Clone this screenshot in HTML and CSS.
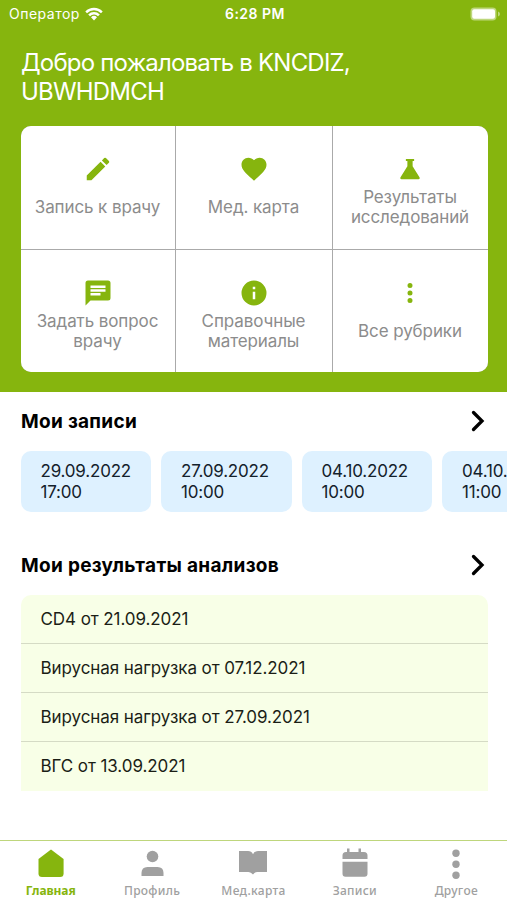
FILE: index.html
```html
<!DOCTYPE html>
<html lang="ru">

<head>
    <meta charset="UTF-8">
    <meta name="viewport" content="width=device-width, initial-scale=1.0">
    <title>Главная</title>
    <link rel="stylesheet" href="styles.css">
</head>

<body>
    <div class="app">
        <header class="header">
            <div class="status-bar">
                <div class="operator">
                    <span>Оператор</span>
                    <svg class="wifi" viewBox="0 0 18 14">
                        <path d="M0.3 4.4a12.4 12.4 0 0 1 17.4 0l-1.7 1.8a10 10 0 0 0-14 0z" />
                        <path d="M3.2 7.4a8.3 8.3 0 0 1 11.6 0l-1.8 1.8a5.8 5.8 0 0 0-8 0z" />
                        <path d="M6 10.3a4.3 4.3 0 0 1 6 0l-3 3.2z" />
                    </svg>
                </div>
                <div class="time">6:28 PM</div>
                <svg class="battery" viewBox="0 0 31 14">
                    <rect class="battery-case" x="0.5" y="0.5" width="26" height="13" rx="4" />
                    <rect x="2.2" y="2.2" width="22.8" height="9.6" rx="2" />
                    <path class="battery-tip" d="M28 4.6q2 0.8 2 2.4t-2 2.4z" />
                </svg>
            </div>
            <h1 class="welcome">Добро пожаловать в KNCDIZ, UBWHDMCH</h1>
            <div class="menu">
                <a class="menu-item">
                    <svg viewBox="0 0 24 24"><path d="M3 17.25V21h3.75L17.81 9.94l-3.75-3.75zM20.71 7.04a1 1 0 0 0 0-1.41l-2.34-2.34a1 1 0 0 0-1.41 0l-1.83 1.83 3.75 3.75z" /></svg>
                    <span>Запись к врачу</span>
                </a>
                <a class="menu-item">
                    <svg viewBox="0 0 24 24"><path d="M12 21.35l-1.45-1.32C5.4 15.36 2 12.28 2 8.5 2 5.42 4.42 3 7.5 3c1.74 0 3.41.81 4.5 2.09C13.09 3.81 14.76 3 16.5 3 19.58 3 22 5.42 22 8.5c0 3.78-3.4 6.86-8.55 11.54z" /></svg>
                    <span>Мед. карта</span>
                </a>
                <a class="menu-item two-lines">
                    <svg viewBox="0 0 24 24"><path d="M8.7 4h6.6v1.5h-1.2v4.3l5.6 9q.4 1.400-.8 1.400H5.100q-1.200 0-.8-1.400l5.600-9V5.500H8.700z" /></svg>
                    <span>Результаты исследований</span>
                </a>
                <a class="menu-item two-lines">
                    <svg viewBox="0 0 24 24"><path d="M20 2H4a2 2 0 0 0-2 2v18l4-4h14a2 2 0 0 0 2-2V4a2 2 0 0 0-2-2zM6 9h12v2H6zm8 5H6v-2h8zm4-6H6V6h12z" /></svg>
                    <span>Задать вопрос врачу</span>
                </a>
                <a class="menu-item two-lines">
                    <svg viewBox="0 0 24 24"><path d="M12 2a10 10 0 1 0 0 20 10 10 0 0 0 0-20zm1 15h-2v-6h2zm0-8h-2V7h2z" /></svg>
                    <span>Справочные материалы</span>
                </a>
                <a class="menu-item">
                    <svg viewBox="0 0 24 24"><path d="M12 8a2 2 0 1 0 0-4 2 2 0 0 0 0 4zm0 2a2 2 0 1 0 0 4 2 2 0 0 0 0-4zm0 6a2 2 0 1 0 0 4 2 2 0 0 0 0-4z" /></svg>
                    <span>Все рубрики</span>
                </a>
            </div>
        </header>

        <main class="content">
            <section class="records">
                <div class="section-heading">
                    <h2>Мои записи</h2>
                    <svg class="arrow" viewBox="0 0 14 22"><path d="M2.500 2.500l8.500 8.500-8.500 8.500" /></svg>
                </div>
                <div class="record-list">
                    <div class="record">29.09.2022<br>17:00</div>
                    <div class="record">27.09.2022<br>10:00</div>
                    <div class="record">04.10.2022<br>10:00</div>
                    <div class="record">04.10.2022<br>11:00</div>
                </div>
            </section>

            <section class="results">
                <div class="section-heading">
                    <h2>Мои результаты анализов</h2>
                    <svg class="arrow" viewBox="0 0 14 22"><path d="M2.500 2.500l8.500 8.500-8.500 8.500" /></svg>
                </div>
                <ul class="result-list">
                    <li>CD4 от 21.09.2021</li>
                    <li>Вирусная нагрузка от 07.12.2021</li>
                    <li>Вирусная нагрузка от 27.09.2021</li>
                    <li>ВГС от 13.09.2021</li>
                </ul>
            </section>
        </main>

        <nav class="tabs">
            <a class="tab active">
                <svg viewBox="0 0 32 32"><path d="M16 2.500L28.600 12v14.500q0 3.500-3.500 3.500H7q-3.500 0-3.500-3.500V12z" /></svg>
                <span>Главная</span>
            </a>
            <a class="tab">
                <svg viewBox="0 0 32 32"><circle cx="16.500" cy="9.500" r="5.800" /><path d="M5.500 29v-3q0-6 6-6h10q6 0 6 6v3z" /></svg>
                <span>Профиль</span>
            </a>
            <a class="tab">
                <svg viewBox="0 0 32 32"><path d="M2 4h9q3.500 0 5 3.200Q17.500 4 21 4h9v21h-9.500q-2.500 0-4.500 2.500-2-2.500-4.500-2.500H2z" /></svg>
                <span>Мед.карта</span>
            </a>
            <a class="tab">
                <svg viewBox="0 0 32 32"><path d="M8 1.500h2.500V5h9V1.500H22V5h3q3.500 0 3.500 3.500V12h-25V8.500Q3.500 5 7 5h1zM3.500 14.800h25v12q0 3-3 3h-19q-3 0-3-3z" /></svg>
                <span>Записи</span>
            </a>
            <a class="tab">
                <svg viewBox="0 0 32 32"><circle cx="16" cy="6.300" r="3.700" /><circle cx="16" cy="17.300" r="3.700" /><circle cx="16" cy="28.200" r="3.700" /></svg>
                <span>Другое</span>
            </a>
        </nav>
    </div>
</body>

</html>
```
FILE: styles.css
```css
* {
    margin: 0px;
    padding: 0px;
    box-sizing: border-box;
}

body {
    font-family: "Inter", sans-serif;
    background-color: white;
}

.app {
    display: flex;
    flex-direction: column;
    height: 900px;
    overflow: hidden;
}

.header {
    height: 392px;
    background-color: #86b50e;
    color: white;
}

.status-bar {
    display: grid;
    grid-template-columns: 1fr auto 1fr;
    align-items: center;
    height: 27px;
    padding: 0px 6px 0px 9px;
}

.operator {
    display: flex;
    align-items: center;
    gap: 5px;
    font-size: 14px;
    letter-spacing: 0.5px;
}

.wifi {
    width: 18px;
    height: 14px;
    fill: white;
}

.time {
    font-size: 14px;
    font-weight: 600;
    letter-spacing: 0.5px;
}

.battery {
    width: 31px;
    height: 14px;
    fill: white;
    justify-self: end;
}

.battery-case,
.battery-tip {
    fill: #bdd77c;
}

.welcome {
    padding: 21px 21px 0px;
    font-size: 24px;
    font-weight: 400;
    line-height: 29px;
    letter-spacing: -0.8px;
}

.menu {
    display: grid;
    grid-template-columns: 154px 156px 155px;
    grid-template-rows: 123px 122px;
    gap: 1px;
    width: 467px;
    margin: 20px 0px 0px 20.5px;
    background-color: #aaaaaa;
    border-radius: 10px;
    overflow: hidden;
}

.menu-item {
    display: flex;
    flex-direction: column;
    align-items: center;
    gap: 13px;
    padding-top: 30px;
    background-color: white;
    color: #8c8c8c;
    font-size: 17px;
    line-height: 20px;
    letter-spacing: -0.1px;
    text-align: center;
}

.menu-item.two-lines {
    gap: 3px;
    padding: 30px 10px 0px;
}

.menu-item svg {
    width: 30px;
    height: 30px;
    margin-top: -2px;
    fill: #86b50e;
}

.section-heading {
    display: flex;
    justify-content: space-between;
    align-items: center;
    height: 59px;
    padding: 0px 22px 0px 21px;
}

.section-heading h2 {
    font-size: 19px;
    font-weight: 700;
    letter-spacing: 0.3px;
    color: black;
}

.arrow {
    width: 14px;
    height: 22px;
    margin-top: -1px;
    fill: none;
    stroke: black;
    stroke-width: 3.3;
    stroke-linecap: round;
}

.record-list {
    display: flex;
    gap: 10px;
    padding-left: 20.5px;
}

.record {
    flex: 0 0 130.5px;
    height: 61px;
    padding: 10px 0px 0px 20px;
    background-color: #def1ff;
    border-radius: 10px;
    color: #14212b;
    font-size: 17px;
    line-height: 20.5px;
    letter-spacing: -0.2px;
}

.results {
    margin-top: 24px;
}

.result-list {
    list-style: none;
    width: 467px;
    margin-left: 20.5px;
    background-color: #f8ffe7;
    border-radius: 10px 10px 0px 0px;
}

.result-list li {
    height: 49px;
    padding-left: 20px;
    border-bottom: 1px solid #d5dbc5;
    color: #1b1e16;
    font-size: 17px;
    line-height: 48px;
    letter-spacing: -0.08px;
}

.result-list li:last-child {
    border-bottom: none;
}

.tabs {
    display: grid;
    grid-template-columns: repeat(5, 1fr);
    height: 60px;
    margin-top: auto;
    border-top: 1px solid #bed67c;
}

.tab {
    display: flex;
    flex-direction: column;
    align-items: center;
    padding-top: 6px;
    color: #a0a0a0;
    font-family: "Noto Sans", sans-serif;
    font-size: 12px;
    font-weight: 500;
    line-height: 16px;
    letter-spacing: 0.3px;
}

.tab svg {
    width: 32px;
    height: 32px;
    margin-bottom: 4px;
    fill: #a0a0a0;
}

.tab.active {
    color: #86b50e;
    font-weight: 700;
    letter-spacing: -0.1px;
}

.tab.active svg {
    fill: #86b50e;
}
```
